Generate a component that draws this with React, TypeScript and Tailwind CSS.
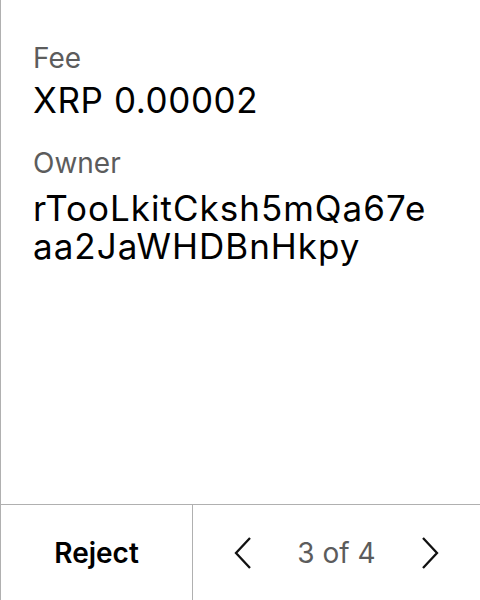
import React from "react";

export default function App() {
  return (
    <div
      className="w-[480px] h-[600px] flex flex-col bg-white border-l border-[#b0b0b0] text-black"
      style={{ fontFamily: "Inter, 'Liberation Sans', sans-serif" }}
    >
      <div className="flex-1 flex flex-col pl-[32px] pr-[44px] pt-[41px]">
        <div className="text-[28px] leading-[34px] text-[#5c5c5c]">Fee</div>
        <div className="text-[35px] leading-[42px] tracking-[0.6px] mt-[4px]">XRP 0.00002</div>
        <div className="text-[28px] leading-[34px] text-[#5c5c5c] mt-[25px]">Owner</div>
        <div className="text-[35px] leading-[38px] tracking-[1px] mt-[9px] break-all">
          rTooLkitCksh5mQa67eaa2JaWHDBnHkpy
        </div>
      </div>
      <div className="h-[96px] flex border-t border-[#b0b0b0]">
        <button className="w-[192px] flex items-center justify-center text-[28px] font-semibold border-r border-[#b0b0b0]">
          Reject
        </button>
        <div className="flex-1 flex items-center justify-center">
          <svg width="18" height="32" viewBox="0 0 18 32" fill="none" stroke="#111" strokeWidth="2.3">
            <path d="M16 1 L2 16 L16 31" />
          </svg>
          <span className="text-[28px] text-[#5c5c5c] mx-[45px]">3 of 4</span>
          <svg width="18" height="32" viewBox="0 0 18 32" fill="none" stroke="#111" strokeWidth="2.3">
            <path d="M2 1 L16 16 L2 31" />
          </svg>
        </div>
      </div>
    </div>
  );
}
